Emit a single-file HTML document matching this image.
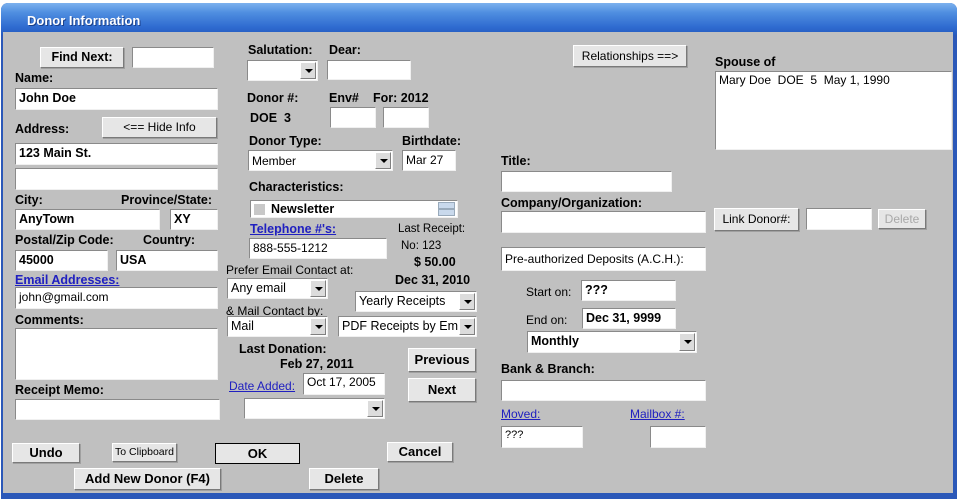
<!DOCTYPE html>
<html><head><meta charset="utf-8"><style>
*{box-sizing:border-box;margin:0;padding:0}
body{width:960px;height:502px;background:#fff;font-family:"Liberation Sans",Arial,sans-serif;font-size:12px;color:#000;overflow:hidden;position:relative}
#win{position:absolute;left:1px;top:3px;width:956px;height:496px;background:#2b58b8;border-radius:7px 7px 0 0}
#tb{position:absolute;left:0;top:0;width:956px;height:32px;border-radius:7px 7px 0 0;background:linear-gradient(#7cb1ee 0%,#4f8ee0 30%,#2f6bd0 75%,#255bbf 100%)}
#tb span{position:absolute;left:26px;top:10px;color:#fff;font-weight:bold;font-size:13px;text-shadow:1px 1px 0 #1a3f8a}
#cl{position:absolute;left:3px;top:32px;width:950px;height:461px;background:#c0c0c0}
.a{position:absolute;white-space:nowrap}
.l{position:absolute;white-space:nowrap;font-weight:bold;font-size:12.5px}
.n{position:absolute;white-space:nowrap;font-size:12px}
.k{position:absolute;white-space:nowrap;color:#2020c0;text-decoration:underline;font-size:12px}
.t{position:absolute;background:#fff;border:1px solid;border-color:#8a8a8a #f0f0f0 #f0f0f0 #8a8a8a;padding:2px 3px;font-size:12px;white-space:nowrap;overflow:hidden}
.tb{font-weight:bold;font-size:12.5px}
.b{position:absolute;background:#e6e6e6;border:1px solid;border-color:#fff #7a7a7a #7a7a7a #fff;box-shadow:1px 1px 0 #a0a0a0;text-align:center;font-size:12px;white-space:nowrap}
.bb{font-weight:bold;font-size:13px}
.c{position:absolute;background:#fff;border:1px solid;border-color:#8a8a8a #f0f0f0 #f0f0f0 #8a8a8a;padding:2px 3px;font-size:12.5px;white-space:nowrap;overflow:hidden}
.c i{position:absolute;right:1px;top:1px;bottom:1px;width:16px;background:#dcdcdc;border:1px solid;border-color:#fff #808080 #808080 #fff}
.c i:after{content:"";position:absolute;left:4px;top:50%;margin-top:-2px;border-left:4px solid transparent;border-right:4px solid transparent;border-top:4px solid #000}
</style></head><body>
<div id="win"><div id="tb"><span>Donor Information</span></div></div>
<div id="cl"></div>

<!-- left column -->
<div class="b bb" style="left:40px;top:47px;width:84px;height:21px;line-height:19px;font-size:12.5px">Find Next:</div>
<div class="t" style="left:132px;top:47px;width:82px;height:21px"></div>
<div class="l" style="left:15px;top:71px">Name:</div>
<div class="t tb" style="left:15px;top:88px;width:203px;height:22px">John Doe</div>
<div class="l" style="left:15px;top:122px">Address:</div>
<div class="b" style="left:102px;top:117px;width:115px;height:21px;line-height:19px">&lt;== Hide Info</div>
<div class="t tb" style="left:15px;top:143px;width:203px;height:22px">123 Main St.</div>
<div class="t" style="left:15px;top:168px;width:203px;height:22px"></div>
<div class="l" style="left:15px;top:193px">City:</div>
<div class="l" style="left:121px;top:193px">Province/State:</div>
<div class="t tb" style="left:15px;top:209px;width:145px;height:21px">AnyTown</div>
<div class="t tb" style="left:170px;top:209px;width:48px;height:21px">XY</div>
<div class="l" style="left:15px;top:233px">Postal/Zip Code:</div>
<div class="l" style="left:143px;top:233px">Country:</div>
<div class="t tb" style="left:15px;top:250px;width:93px;height:21px">45000</div>
<div class="t tb" style="left:116px;top:250px;width:102px;height:21px">USA</div>
<div class="k" style="left:15px;top:273px;font-weight:bold;font-size:12.5px">Email Addresses:</div>
<div class="t" style="left:15px;top:287px;width:203px;height:22px">john@gmail.com</div>
<div class="l" style="left:15px;top:313px">Comments:</div>
<div class="t" style="left:15px;top:328px;width:203px;height:52px"></div>
<div class="l" style="left:15px;top:383px">Receipt Memo:</div>
<div class="t" style="left:15px;top:399px;width:205px;height:21px"></div>

<div class="b bb" style="left:12px;top:443px;width:68px;height:20px;line-height:18px">Undo</div>
<div class="b" style="left:112px;top:443px;width:65px;height:19px;line-height:17px;font-size:10.5px">To Clipboard</div>
<div class="b bb" style="left:215px;top:443px;width:85px;height:21px;line-height:19px;border:1px solid #000;box-shadow:none">OK</div>
<div class="b bb" style="left:387px;top:442px;width:66px;height:20px;line-height:18px">Cancel</div>
<div class="b bb" style="left:74px;top:468px;width:147px;height:22px;line-height:20px">Add New Donor (F4)</div>
<div class="b bb" style="left:309px;top:468px;width:70px;height:22px;line-height:20px">Delete</div>

<!-- middle column -->
<div class="l" style="left:248px;top:43px">Salutation:</div>
<div class="l" style="left:329px;top:43px">Dear:</div>
<div class="c" style="left:247px;top:60px;width:71px;height:21px"><i></i></div>
<div class="t" style="left:327px;top:60px;width:84px;height:20px"></div>
<div class="l" style="left:247px;top:91px">Donor #:</div>
<div class="l" style="left:329px;top:91px">Env#</div>
<div class="l" style="left:373px;top:91px">For: 2012</div>
<div class="l" style="left:250px;top:111px">DOE&nbsp; 3</div>
<div class="t" style="left:330px;top:107px;width:46px;height:21px"></div>
<div class="t" style="left:383px;top:107px;width:46px;height:21px"></div>
<div class="l" style="left:249px;top:134px">Donor Type:</div>
<div class="l" style="left:402px;top:134px">Birthdate:</div>
<div class="c" style="left:248px;top:150px;width:145px;height:21px;font-size:12px;padding-top:3px">Member<i></i></div>
<div class="t" style="left:402px;top:150px;width:54px;height:21px">Mar 27</div>
<div class="l" style="left:249px;top:180px">Characteristics:</div>
<div class="t" style="left:250px;top:200px;width:208px;height:18px;padding:1px 3px"><span style="position:absolute;left:3px;top:3px;width:11px;height:11px;background:#c8c8c8"></span><span class="tb" style="position:absolute;left:20px;top:1px">Newsletter</span><span style="position:absolute;right:2px;top:1px;width:17px;height:7px;background:#c9d9ec;border:1px solid #9ab"></span><span style="position:absolute;right:2px;top:8px;width:17px;height:7px;background:#c9d9ec;border:1px solid #9ab"></span></div>
<div class="k" style="left:250px;top:222px;font-weight:bold;font-size:12.5px">Telephone #'s:</div>
<div class="t" style="left:249px;top:238px;width:138px;height:21px">888-555-1212</div>
<div class="n" style="left:398px;top:223px;font-size:11.5px">Last Receipt:</div>
<div class="n" style="left:401px;top:240px;font-size:11.5px">No: 123</div>
<div class="l" style="left:414px;top:255px">$ 50.00</div>
<div class="l" style="left:395px;top:273px">Dec 31, 2010</div>
<div class="n" style="left:226px;top:263px">Prefer Email Contact at:</div>
<div class="c" style="left:227px;top:278px;width:101px;height:21px;font-size:12.5px">Any email<i></i></div>
<div class="c" style="left:355px;top:291px;width:122px;height:21px;font-size:12.5px">Yearly Receipts<i></i></div>
<div class="n" style="left:226px;top:304px">&amp; Mail Contact by:</div>
<div class="c" style="left:227px;top:316px;width:101px;height:21px;font-size:12.5px">Mail<i></i></div>
<div class="c" style="left:338px;top:316px;width:139px;height:21px;font-size:12.5px">PDF Receipts by Em<i></i></div>
<div class="l" style="left:239px;top:342px">Last Donation:</div>
<div class="l" style="left:280px;top:357px">Feb 27, 2011</div>
<div class="k" style="left:229px;top:379px">Date Added:</div>
<div class="t" style="left:303px;top:373px;width:82px;height:22px;padding-top:1px">Oct 17, 2005</div>
<div class="c" style="left:244px;top:398px;width:141px;height:21px"><i></i></div>
<div class="b bb" style="left:408px;top:348px;width:68px;height:24px;line-height:22px">Previous</div>
<div class="b bb" style="left:408px;top:378px;width:68px;height:24px;line-height:22px">Next</div>

<!-- right column -->
<div class="b" style="left:573px;top:45px;width:114px;height:22px;line-height:20px">Relationships ==&gt;</div>
<div class="l" style="left:715px;top:55px">Spouse of</div>
<div class="t" style="left:715px;top:71px;width:237px;height:79px;padding-top:1px">Mary Doe&nbsp; DOE&nbsp; 5&nbsp; May 1, 1990</div>
<div class="l" style="left:501px;top:154px">Title:</div>
<div class="t" style="left:501px;top:171px;width:171px;height:21px"></div>
<div class="l" style="left:501px;top:196px">Company/Organization:</div>
<div class="t" style="left:501px;top:211px;width:205px;height:22px"></div>
<div class="b" style="left:714px;top:208px;width:85px;height:23px;line-height:21px">Link Donor#:</div>
<div class="t" style="left:806px;top:208px;width:66px;height:22px"></div>
<div class="b" style="left:878px;top:209px;width:48px;height:20px;line-height:18px;color:#a8a8a8">Delete</div>
<div class="t" style="left:501px;top:247px;width:205px;height:24px;padding-top:4px">Pre-authorized Deposits (A.C.H.):</div>
<div class="n" style="left:526px;top:285px">Start on:</div>
<div class="t tb" style="left:581px;top:280px;width:95px;height:21px">???</div>
<div class="n" style="left:526px;top:313px">End on:</div>
<div class="t tb" style="left:582px;top:308px;width:94px;height:21px">Dec 31, 9999</div>
<div class="c tb" style="left:527px;top:331px;width:170px;height:22px">Monthly<i></i></div>
<div class="l" style="left:501px;top:362px">Bank &amp; Branch:</div>
<div class="t" style="left:501px;top:380px;width:205px;height:21px"></div>
<div class="k" style="left:501px;top:407px">Moved:</div>
<div class="k" style="left:630px;top:407px">Mailbox #:</div>
<div class="t" style="left:501px;top:426px;width:82px;height:22px;font-size:11px">???</div>
<div class="t" style="left:650px;top:426px;width:56px;height:22px"></div>
</body></html>
